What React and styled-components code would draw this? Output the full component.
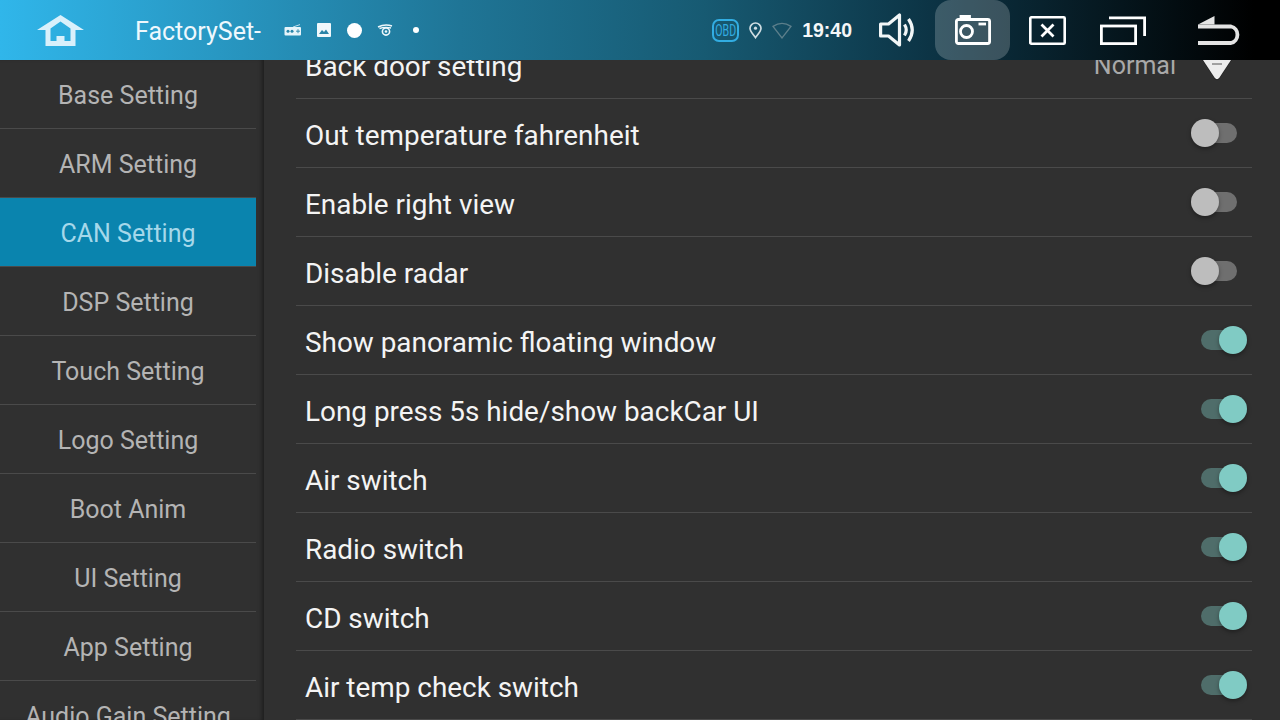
import styled, { createGlobalStyle } from 'styled-components'

const GlobalStyle = createGlobalStyle`
  html, body {
    margin: 0;
    padding: 0;
    height: 100%;
    background: #303030;
    overflow: hidden;
  }
  * {
    box-sizing: border-box;
  }
`

const menuItems = [
  'Base Setting',
  'ARM Setting',
  'CAN Setting',
  'DSP Setting',
  'Touch Setting',
  'Logo Setting',
  'Boot Anim',
  'UI Setting',
  'App Setting',
  'Audio Gain Setting',
]

const switches = [
  { label: 'Out temperature fahrenheit', on: false },
  { label: 'Enable right view', on: false },
  { label: 'Disable radar', on: false },
  { label: 'Show panoramic floating window', on: true },
  { label: 'Long press 5s hide/show backCar UI', on: true },
  { label: 'Air switch', on: true },
  { label: 'Radio switch', on: true },
  { label: 'CD switch', on: true },
  { label: 'Air temp check switch', on: true },
]

const App = () => {
  return (
    <Screen>
      <GlobalStyle />
      <Header>
        <HomeButton>
          <svg width="49" height="33" viewBox="0 0 49 33">
            <path
              fillRule="evenodd"
              fill="#d9f0fb"
              d="M1 16 L24.5 1 L48 16 H39.5 V32 H9.5 V16 Z M14.5 14.5 V27 H20.5 V22 H28.5 V27 H34.5 V14.5 L24.5 7.5 Z"
            />
          </svg>
        </HomeButton>
        <Title>FactorySet-</Title>
        <StatusIcons>
          <StatusSlot>
            <svg width="18" height="12" viewBox="0 0 18 12">
              <path d="M9 3 L16 0.6" stroke="#e6f4fa" strokeWidth="0.8" />
              <rect x="0.5" y="3" width="16.5" height="8.5" rx="1" fill="#e6f4fa" />
              <circle cx="4" cy="7.2" r="1.5" fill="#2a86aa" />
              <circle cx="8" cy="7.2" r="1.5" fill="#2a86aa" />
              <path d="M12 7.2 H16 M14 5.2 V9.2" stroke="#2a86aa" strokeWidth="0.9" />
            </svg>
          </StatusSlot>
          <StatusSlot>
            <svg width="14" height="14" viewBox="0 0 14 14">
              <rect width="14" height="14" rx="1" fill="#f0f8fc" />
              <path d="M2 11 L5 7 L7 9 L9 6.5 L12 11 Z" fill="#2a84a8" />
            </svg>
          </StatusSlot>
          <StatusSlot>
            <Dot $size={15} />
          </StatusSlot>
          <StatusSlot>
            <svg width="16" height="13" viewBox="0 0 16 13" fill="none" stroke="#eef7fb">
              <path d="M1 3 Q8 -0.5 15 2" strokeWidth="1.4" />
              <path d="M2.5 4.5 Q8 2.5 14 4" strokeWidth="1.4" />
              <circle cx="9" cy="7.5" r="3.6" strokeWidth="1.6" />
              <circle cx="9" cy="7.5" r="1.3" fill="#eef7fb" stroke="none" />
            </svg>
          </StatusSlot>
          <StatusSlot>
            <Dot $size={6} />
          </StatusSlot>
        </StatusIcons>
        <SystemStatus>
          <ObdBadge>
            <ObdText>OBD</ObdText>
          </ObdBadge>
          <svg width="13" height="17" viewBox="0 0 13 17" fill="none" stroke="#cfdde2" strokeWidth="1.7">
            <path d="M6.5 15.6 C4 11.8 1 9.4 1 6.2 A5.5 5.2 0 0 1 12 6.2 C12 9.4 9 11.8 6.5 15.6 Z" />
            <circle cx="6.5" cy="6.2" r="1.6" fill="#cfdde2" stroke="none" />
          </svg>
          <svg width="20" height="17" viewBox="0 0 20 17" fill="none" stroke="#5c7f8b" strokeWidth="1.3">
            <path d="M1 4.4 Q10 -1.6 19 4.4 L10 16 Z" />
          </svg>
          <Clock>19:40</Clock>
        </SystemStatus>
        <NavButton>
          <svg width="38" height="34" viewBox="0 0 38 34" fill="none" stroke="#f2f6f7" strokeWidth="3.2">
            <path d="M1.6 11 H9.5 L20.5 2 V32 L9.5 23 H1.6 Z" strokeLinejoin="round" />
            <path d="M25.5 11.5 Q29 17 25.5 22.5" />
            <path d="M29.5 6 Q37 17 29.5 28" />
          </svg>
        </NavButton>
        <NavButton $active>
          <svg width="36" height="30" viewBox="0 0 36 30" fill="none" stroke="#fff" strokeWidth="2.8">
            <path d="M6 4 V1.5 H14.5 V4" fill="#fff" />
            <rect x="1.4" y="4.5" width="33.2" height="24" rx="2" />
            <circle cx="11.5" cy="16.5" r="6" />
            <path d="M23.5 9 H31" />
          </svg>
        </NavButton>
        <NavButton>
          <svg width="37" height="29" viewBox="0 0 37 29" fill="none" stroke="#fff" strokeWidth="2.6">
            <rect x="1.3" y="1.3" width="34.4" height="26.4" rx="1" />
            <path d="M12.5 8.5 L24.5 20.5 M24.5 8.5 L12.5 20.5" strokeWidth="2.8" />
          </svg>
        </NavButton>
        <NavButton>
          <svg width="46" height="29" viewBox="0 0 46 29" fill="none" stroke="#fff" strokeWidth="2.8">
            <rect x="1.4" y="10" width="34.2" height="17.6" />
            <path d="M9 1.8 H44.6 V20" />
          </svg>
        </NavButton>
        <BackButton>
          <svg width="44" height="30" viewBox="0 0 44 30" fill="none" stroke="#e4e4e4" strokeWidth="3.8">
            <path d="M0 11.5 H33 A8.5 8.5 0 0 1 33 28 H0" />
            <path d="M16.5 1 L0 9.6 H16.5 Z" fill="#e4e4e4" stroke="none" />
          </svg>
        </BackButton>
      </Header>
      <Body>
        <Sidebar>
          {menuItems.map(item => (
            <MenuItem key={item} $active={item === 'CAN Setting'}>
              {item}
            </MenuItem>
          ))}
        </Sidebar>
        <Content>
          <SettingsList>
            <SettingRow>
              <RowLabel>Back door setting</RowLabel>
              <SelectValue>
                <SelectText>Normal</SelectText>
                <svg width="32" height="36" viewBox="0 0 32 36">
                  <path d="M-2 8 H34 L18.5 31.5 Q16 35 13.5 31.5 Z" fill="#1c1c1c" transform="translate(0 1)" />
                  <path d="M-2 8 H34 L18.5 31.5 Q16 35 13.5 31.5 Z" fill="#ececec" />
                  <path d="M11 18 H21" stroke="#8d8d8d" strokeWidth="1.6" />
                </svg>
              </SelectValue>
            </SettingRow>
            {switches.map(row => (
              <SettingRow key={row.label}>
                <RowLabel>{row.label}</RowLabel>
                <Toggle $on={row.on}>
                  <Track $on={row.on} />
                  <Thumb $on={row.on} />
                </Toggle>
              </SettingRow>
            ))}
          </SettingsList>
        </Content>
      </Body>
    </Screen>
  )
}

export default App

const Screen = styled.div`
  width: 1280px;
  height: 720px;
  display: flex;
  flex-direction: column;
  overflow: hidden;
  background: #303030;
  font-family: Roboto, 'Liberation Sans', sans-serif;
`

const Header = styled.header`
  position: relative;
  z-index: 2;
  flex: 0 0 60px;
  display: flex;
  align-items: center;
  background: linear-gradient(90deg, #30b6ea 0%, #1f7596 36%, #175a72 55%, #0c3344 73%, #000 98%);
`

const HomeButton = styled.div`
  width: 120px;
  height: 60px;
  display: flex;
  align-items: center;
  justify-content: center;
`

const Title = styled.div`
  width: 148px;
  padding: 3px 0 0 15px;
  color: #eef8fd;
  font-size: 25px;
  white-space: nowrap;
`

const StatusIcons = styled.div`
  display: flex;
  align-items: center;
  margin-left: 10px;
`

const StatusSlot = styled.div`
  width: 30.6px;
  display: flex;
  justify-content: center;
`

const Dot = styled.div`
  width: ${p => p.$size}px;
  height: ${p => p.$size}px;
  border-radius: 50%;
  background: #fff;
`

const SystemStatus = styled.div`
  margin-left: auto;
  display: flex;
  align-items: center;
  gap: 10px;
  padding-right: 8px;
`

const ObdBadge = styled.div`
  width: 27px;
  height: 23px;
  border: 2px solid #32ade2;
  border-radius: 7px;
  display: flex;
  align-items: center;
  justify-content: center;
`

const ObdText = styled.span`
  display: block;
  color: #32ade2;
  font-size: 16px;
  transform: scaleX(0.66);
`

const Clock = styled.div`
  color: #f4f7f8;
  font-family: 'Liberation Sans', Arial, sans-serif;
  font-size: 19.5px;
  font-weight: 700;
`

const NavButton = styled.div`
  width: 75px;
  height: 60px;
  display: flex;
  align-items: center;
  justify-content: center;
  border-radius: ${p => (p.$active ? '16px' : '0')};
  background: ${p => (p.$active ? 'rgba(255, 255, 255, 0.2)' : 'transparent')};
`

const BackButton = styled(NavButton)`
  width: 120px;
`

const Body = styled.div`
  flex: 1;
  min-height: 0;
  display: flex;
`

const Sidebar = styled.nav`
  flex: 0 0 264px;
  padding-right: 8px;
  overflow: hidden;
  box-shadow: inset -4px 0 4px -2px rgba(0, 0, 0, 0.4);
`

const MenuItem = styled.div`
  height: 69px;
  padding-top: 3px;
  display: flex;
  align-items: center;
  justify-content: center;
  font-size: 25px;
  color: ${p => (p.$active ? '#a5d8ea' : '#b4b4b4')};
  background: ${p => (p.$active ? '#0a84ae' : 'transparent')};
  border-bottom: 1px solid #4a4a4a;
`

const Content = styled.main`
  flex: 1;
  min-width: 0;
  overflow: hidden;
  padding: 0 28px 0 32px;
`

const SettingsList = styled.div`
  margin-top: -30px;
`

const SettingRow = styled.div`
  height: 69px;
  display: flex;
  align-items: center;
  justify-content: space-between;
  padding: 0 5px 0 9px;
  color: #f4f4f4;
  font-size: 27.9px;
  border-bottom: 1px solid #4a4a4a;
`

const RowLabel = styled.span`
  margin-top: 4px;
`

const SelectValue = styled.div`
  display: flex;
  align-items: center;
  gap: 25px;
  padding-right: 14px;
`

const SelectText = styled.span`
  margin-top: 2px;
  color: #a9a9a9;
  font-size: 25px;
`

const Toggle = styled.div`
  position: relative;
  width: 56px;
  height: 28px;
`

const Track = styled.div`
  position: absolute;
  left: 10px;
  top: 4px;
  width: 36px;
  height: 20px;
  border-radius: 10px;
  background: ${p => (p.$on ? '#4f6d6a' : '#6f6f6f')};
`

const Thumb = styled.div`
  position: absolute;
  top: 0;
  left: ${p => (p.$on ? '28px' : '0')};
  width: 28px;
  height: 28px;
  border-radius: 50%;
  background: ${p => (p.$on ? '#80cbc4' : '#bdbdbd')};
  box-shadow: 0 2px 4px rgba(0, 0, 0, 0.35);
`
